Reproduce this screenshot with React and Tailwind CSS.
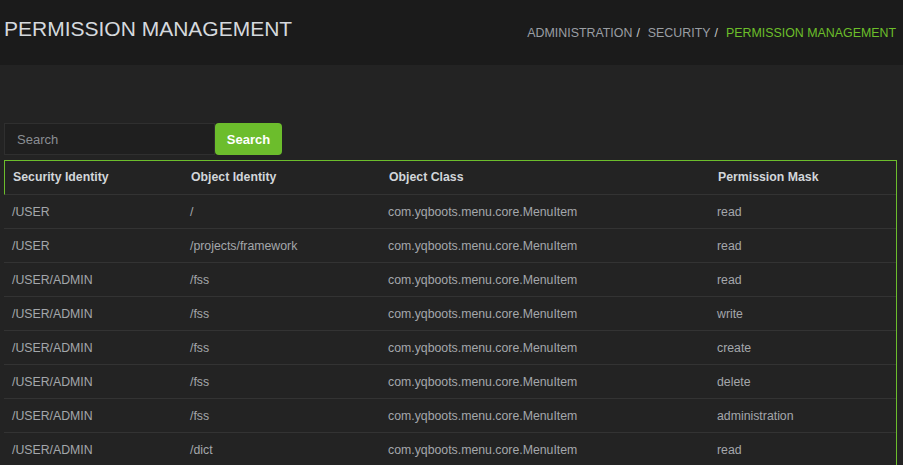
import React from "react"

const rows = [
  ["/USER", "/", "com.yqboots.menu.core.MenuItem", "read"],
  ["/USER", "/projects/framework", "com.yqboots.menu.core.MenuItem", "read"],
  ["/USER/ADMIN", "/fss", "com.yqboots.menu.core.MenuItem", "read"],
  ["/USER/ADMIN", "/fss", "com.yqboots.menu.core.MenuItem", "write"],
  ["/USER/ADMIN", "/fss", "com.yqboots.menu.core.MenuItem", "create"],
  ["/USER/ADMIN", "/fss", "com.yqboots.menu.core.MenuItem", "delete"],
  ["/USER/ADMIN", "/fss", "com.yqboots.menu.core.MenuItem", "administration"],
  ["/USER/ADMIN", "/dict", "com.yqboots.menu.core.MenuItem", "read"],
]

export default function App() {
  return (
    <div className="min-h-screen bg-[#232323] font-['Liberation_Sans',Arial,sans-serif] overflow-hidden h-[465px]">
      <header className="h-[65px] bg-[#1b1b1b] flex items-start justify-between pl-[4px] pr-[7px]">
        <h1 className="text-[21px] leading-none mt-[18px] text-[#d5d9de]">PERMISSION MANAGEMENT</h1>
        <nav className="mt-[27px] text-[12.4px] leading-none flex items-center">
          <span className="text-[#9a9ea3]">ADMINISTRATION</span>
          <span className="text-[#c8c8c8] ml-[4px] mr-[8px]">/</span>
          <span className="text-[#9a9ea3]">SECURITY</span>
          <span className="text-[#c8c8c8] ml-[4px] mr-[8px]">/</span>
          <span className="text-[#6cbf2a]">PERMISSION MANAGEMENT</span>
        </nav>
      </header>

      <div className="pl-[4px] pr-[6px] pt-[58px]">
        <div className="flex h-[32px]">
          <input
            placeholder="Search"
            className="w-[211px] h-[32px] bg-[#1f1f1f] border border-[#2f2f2f] px-[12px] text-[13px] text-[#ccc] placeholder:text-[#8a8e93] outline-none"
          />
          <button className="w-[67px] h-[32px] pt-[1px] rounded-[4px] bg-[#6cbd2c] text-white text-[13px] font-bold">Search</button>
        </div>

        <div className="mt-[5px] border-t border-r border-[#6cbd2c] text-[12.3px]">
          <div className="grid grid-cols-[177px_198px_329px_1fr] h-[34px] items-center border-l border-l-[#6cbd2c] border-b border-b-[#333] font-bold text-[#d2d6da]">
            <div className="pl-[8px]">Security Identity</div>
            <div className="pl-[9px]">Object Identity</div>
            <div className="pl-[9px]">Object Class</div>
            <div className="pl-[9px]">Permission Mask</div>
          </div>
          {rows.map((r, i) => (
            <div key={i} className="grid grid-cols-[177px_198px_329px_1fr] h-[34px] pt-[2px] items-center border-b border-[#333] text-[#a3a7ab]">
              <div className="pl-[8px]">{r[0]}</div>
              <div className="pl-[9px]">{r[1]}</div>
              <div className="pl-[9px]">{r[2]}</div>
              <div className="pl-[9px]">{r[3]}</div>
            </div>
          ))}
        </div>
      </div>
    </div>
  )
}
